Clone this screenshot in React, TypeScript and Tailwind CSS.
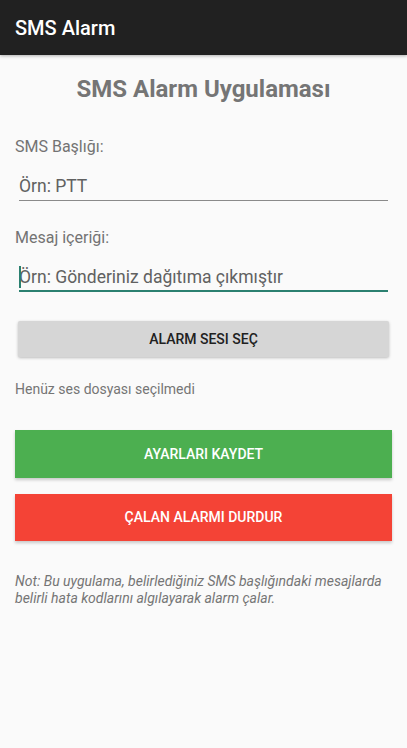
export default function App() {
  return (
    <div className="min-h-[748px] bg-[#fafafa] font-['Roboto',sans-serif]">
      {/* App bar */}
      <div className="h-[55px] bg-[#212121] flex items-center px-[15px] shadow-[0_1px_3px_rgba(0,0,0,0.3)]">
        <h1 className="text-[20px] font-medium text-white">SMS Alarm</h1>
      </div>

      <div className="px-[15px] flex flex-col">
        <h2 className="mt-[19px] text-center text-[24px] leading-[30px] font-bold text-[#757575]">SMS Alarm Uygulaması</h2>

        <p className="mt-[33px] text-[16px] leading-[20px] text-[#737373]">SMS Başlığı:</p>
        <div className="mt-[17px] mx-[4px] h-[27px] border-b border-[#8a8a8a]">
          <p className="text-[17.5px] leading-[24px] text-[#616161]">Örn: PTT</p>
        </div>

        <p className="mt-[27px] text-[16px] leading-[20px] text-[#737373]">Mesaj içeriği:</p>
        <div className="relative mt-[17px] mx-[4px] h-[27px] border-b-2 border-[#2b8070]">
          <span className="absolute left-0 top-[1px] w-[2px] h-[22px] bg-[#2b8070]" />
          <p className="text-[17.5px] leading-[24px] text-[#616161]">Örn: Gönderiniz dağıtıma çıkmıştır</p>
        </div>

        <button className="mt-[29px] mx-[3px] h-[36px] bg-[#d6d6d6] rounded-[2px] shadow-[0_1px_3px_rgba(0,0,0,0.25)] text-[14px] font-medium text-[#212121]">
          ALARM SESI SEÇ
        </button>

        <p className="mt-[22px] text-[14px] leading-[20px] text-[#757575]">Henüz ses dosyası seçilmedi</p>

        <button className="mt-[31px] h-[48px] bg-[#4caf50] shadow-[0_2px_3px_rgba(0,0,0,0.2)] text-[14px] font-medium text-white">
          AYARLARI KAYDET
        </button>
        <button className="mt-[16px] h-[47px] bg-[#f44336] shadow-[0_2px_3px_rgba(0,0,0,0.2)] text-[14px] font-medium text-white">
          ÇALAN ALARMI DURDUR
        </button>

        <p className="mt-[32px] text-[14px] leading-[17px] italic text-[#757575]">
          Not: Bu uygulama, belirlediğiniz SMS başlığındaki mesajlarda belirli hata kodlarını algılayarak alarm çalar.
        </p>
      </div>
    </div>
  );
}
